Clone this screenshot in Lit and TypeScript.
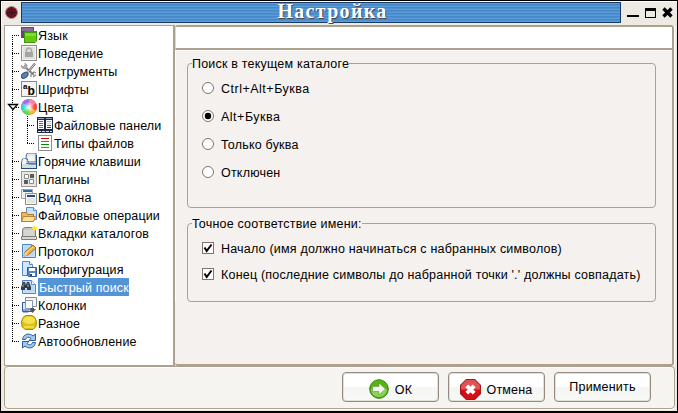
import { LitElement, html, svg, css } from "lit";
import { customElement, property, state } from "lit/decorators.js";
import { classMap } from "lit/directives/class-map.js";

const page = svg`<path d="M1.500 1.500h9l4 4v9h-13z" fill="#d5e9fb" stroke="#4c83c3"/><path d="M2.500 2.500h7v3h4v8h-11z" fill="#b8d9f7"/><path d="M10.500 1.500v4h4" fill="#f5fbff" stroke="#5b91cc"/>`;

const icons: Record<string, unknown> = {
  lang: svg`<path d="M0 0h13v11H0z" fill="#67466f"/><path d="M1 1h11v3H1z" fill="#8c6c94"/><path d="M3 5l2-1h11v10l-2 2H3z" fill="#3f9710"/><path d="M4 6h11v9H4z" fill="#68c80c"/><path d="M4 6h11v3H4z" fill="#83dd30"/>`,
  lock: svg`<rect x=".5" y=".5" width="15" height="15" fill="#f2f2f0" stroke="#8f8f8c"/><path d="M2 2h12v12H2z" fill="#e0e0de"/><path d="M5.500 8V5.500a2.500 2.500 0 0 1 5 0V8" fill="none" stroke="#aaa" stroke-width="1.500"/><path d="M4 7h8v5H4z" fill="#a5a5a3"/>`,
  tools: svg`<path d="M3 3l10 9" stroke="#858585" stroke-width="2"/><path d="M0 2l2 2 2-1V0l2 2v3L4 6 1 5z" fill="#b5b5b5" stroke="#777" stroke-width=".5"/><path d="M14 .5L7 9" stroke="#666" stroke-width="2.200"/><path d="M14 .5L7 9" stroke="#ddd" stroke-width="1"/><path d="M10 14v-3l3-2 2 1M12 14l3-2" stroke="#888" stroke-width="1.300" fill="none"/><ellipse cx="3.700" cy="12.300" rx="3.800" ry="2.500" transform="rotate(-40 3.700 12.300)" fill="#5a82ad" stroke="#2d4d73"/>`,
  fonts: svg`<rect x=".5" y=".5" width="15" height="15" fill="#f4f4f2" stroke="#888"/><text x="2" y="7.500" font-size="8" font-weight="bold" font-family="Liberation Sans,sans-serif">a</text><text x="6.500" y="13.500" font-size="12" font-weight="bold" font-family="Liberation Sans,sans-serif">b</text>`,
  colors: svg`<g transform="translate(8 8)"><path d="M0 0V-8A8 8 0 0 1 7 -4z" fill="#ff829c"/><path d="M0 0L7-4A8 8 0 0 1 7 4z" fill="#ff4b46"/><path d="M0 0L7 4A8 8 0 0 1 0 8z" fill="#ffb43a"/><path d="M0 0V8A8 8 0 0 1-7 4z" fill="#59e34c"/><path d="M0 0L-7 4A8 8 0 0 1-7-4z" fill="#39d8e8"/><path d="M0 0L-7-4A8 8 0 0 1 0-8z" fill="#a66af5"/><circle r="4.500" fill="#fff" opacity=".35"/><circle r="2.500" fill="#fff" opacity=".6"/><circle r="7.500" fill="none" stroke="#8886" /></g>`,
  panels: svg`<path d="M0 0h16v16H0z" fill="#202548"/><path d="M1 1h6v1H1zm8 0h6v1H9z" fill="#8ea0c8"/><path d="M1 3h6v9H1zm8 0h6v9H9z" fill="#fff"/><path d="M2 4h4v1H2zM10 8h4v1h-4z" fill="#f03030"/><path d="M2 6h4v1H2z" fill="#e0c"/><path d="M2 8h4v1H2z" fill="#008a80"/><path d="M2 10h4v1H2z" fill="#e33"/><path d="M10 4h4v1h-4z" fill="#3dd"/><path d="M10 6h4v1h-4z" fill="#ed0"/><path d="M10 10h4v1h-4z" fill="#22f"/><path d="M1 14.500h14" stroke="#dde" stroke-dasharray="3 1"/>`,
  types: svg`<rect x="1.500" y=".5" width="13" height="15" fill="#fff" stroke="#8c8c88"/><path d="M4 3.500h8" stroke="#c00"/><path d="M4 6.500h8" stroke="#f0f"/><path d="M4 9.500h8" stroke="#080"/><path d="M4 12.500h8" stroke="#c3a"/>`,
  keys: svg`<path d="M5.500 1l2-1h7.500v9H4.500z" fill="#e5e5e2" stroke="#4d76a6"/><path d="M.5 10l1-4h5l1 5h8v4.500H.5z" fill="#d9dcdc" stroke="#315f97"/><path d="M1 10l1-4h3v5H1zM7 3h6v5H7z" fill="#f5f5f2"/><path d="M0 15.500h16M15.500 2v13" stroke="#204a87"/><path d="M5 10.500h10" stroke="#547daa"/>`,
  plugins: svg`<rect x=".5" y=".5" width="15" height="15" fill="#e8e8e5" stroke="#999994"/><path d="M3.500 3.500h4v4h-4zM8.500 8.500h4v4h-4z" fill="#fff" stroke="#8b8b88"/><path d="M9 3h4v4H9zM3 9h4v4H3z" fill="#566063"/>`,
  windows: svg`<path d="M.5.5h11v9H.5z" fill="#eee" stroke="#a5a5a1"/><path d="M2 1h9v2H2z" fill="#3465a4"/><path d="M4.500 4.500h11v11h-11z" fill="#f6f6f4" stroke="#8d8d89"/><path d="M6 6h8v2H6z" fill="#204a87"/><path d="M6 9h8v5H6z" fill="#e4e4e2"/>`,
  files: svg`<path d="M5.500.5h7l3 3v9h-10z" fill="#c7e2fa" stroke="#528bc8"/><path d="M12.500.5v3h3" fill="#fff" stroke="#528bc8"/><path d="M.5 14.500v-9h5l1 2h6v7z" fill="#efb557" stroke="#b27b25"/><path d="M.5 14.500l2-5h12l-2 5z" fill="#ffe09a" stroke="#ba852f"/>`,
  tabs: svg`<path d="M1.500 12V5.500q0-3 3-3h7q3 0 3 3V12" fill="#c7c7c4" stroke="#7d7d79"/><path d="M.5 11.500h15v3H.5z" fill="#d8d8d4" stroke="#7d7d79"/><path d="M3 5h10v6H3z" fill="#d6d6d2"/><path d="M13 0l1 2h2v2l-2 1-1 1-1-2-2-1 2-1z" fill="#ffee20"/>`,
  protocol: svg`${page}<path d="M3 13l1-4 8-7 3 3-8 7z" fill="#f3b14b" stroke="#a66c16"/><path d="M3 13l1-4 3 3z" fill="#f3dfb7"/><path d="M5 10l7-6" stroke="#ffe29a"/>`,
  config: svg`<path d="M1.500.5h7l3 3v11h-10z" fill="#cfe6fb" stroke="#528bc8"/><path d="M8.500.5v3h3" fill="#fff" stroke="#528bc8"/><path d="M6.500 6.500h9v9h-8l-1-1z" fill="#5788c5" stroke="#2d5c9c"/><path d="M8 7h6v3H8zM9 12h5v3H9z" fill="#fff"/><path d="M9 13h2v2H9z" fill="#446"/>`,
  search: svg`${page}<path d="M0 8l2-5h2l1 3 1-3h2l2 5v3H6V9H4v2H0z" fill="#353a3e"/><path d="M1 7h2M6 7h2" stroke="#a6afb7"/><path d="M3 4v2M7 4v2" stroke="#75808a"/>`,
  columns: svg`<path d="M4.500.5h11v9h-11z" fill="#f3f3f1" stroke="#7f8d9d"/><path d="M1.500 5.500h9v9h-9z" fill="#dcebf8" stroke="#2a5d9d"/><path d="M4.500 3.500h7v8h-7z" fill="#fff" stroke="#8497ac"/><path d="M10 11h3v1h2l-3.500 4L8 12h2z" fill="#52545d"/><path d="M2 13h6M2 15h5" stroke="#3465a4"/>`,
  misc: svg`<path d="M5 .5h6l3 2 1.500 4-.5 5-3 3H4l-3-3-.500-5L2 2.500z" fill="#dec31b" stroke="#aa8800"/><ellipse cx="8" cy="5.300" rx="6" ry="3.800" fill="#f3e252"/><path d="M3 12h10" stroke="#f3dc3c" stroke-width="2"/>`,
  update: svg`<path d="M1.500 6.500C2.500 0 9 0 12 3l2.500-2v6.500H8l2-2C8 3.500 5 4 4.500 6.500z" fill="#a5c8eb" stroke="#285f9f"/><path d="M14.500 9.500C13.500 16 7 16 4 13l-2.500 2V8.500H8l-2 2c2 2 5 1.500 5.500-1z" fill="#a5c8eb" stroke="#285f9f"/>`,
};

interface Item { icon: string; label: string; level?: number; open?: boolean; last?: boolean; }
const items: Item[] = [
  { icon: "lang", label: "Язык" },
  { icon: "lock", label: "Поведение" },
  { icon: "tools", label: "Инструменты" },
  { icon: "fonts", label: "Шрифты" },
  { icon: "colors", label: "Цвета", open: true },
  { icon: "panels", label: "Файловые панели", level: 1 },
  { icon: "types", label: "Типы файлов", level: 1, last: true },
  { icon: "keys", label: "Горячие клавиши" },
  { icon: "plugins", label: "Плагины" },
  { icon: "windows", label: "Вид окна" },
  { icon: "files", label: "Файловые операции" },
  { icon: "tabs", label: "Вкладки каталогов" },
  { icon: "protocol", label: "Протокол" },
  { icon: "config", label: "Конфигурация" },
  { icon: "search", label: "Быстрый поиск" },
  { icon: "columns", label: "Колонки" },
  { icon: "misc", label: "Разное" },
  { icon: "update", label: "Автообновление", last: true },
];

@customElement("settings-tree")
export class SettingsTree extends LitElement {
  @state() private selected = "search";
  static styles = css`
    :host { display: block; box-sizing: border-box; width: 171px; height: 341px; background: #fff; border: solid #ada08f; border-width: 1px 2px 1px 1px; letter-spacing: .14px; }
    .row { display: flex; align-items: center; height: 18px; white-space: pre; }
    .gutter { width: 16px; height: 18px; flex: none; }
    .icon { width: 16px; height: 16px; flex: none; display: block; }
    .label { box-sizing: border-box; height: 18px; line-height: 18px; padding-top: 1px; margin-left: 1px; }
    .selected .label { background: #5294d6; color: #fff; padding-left: 1px; }
  `;
  render() {
    return items.map((it, i) => {
      const rootLast = i === items.length - 1;
      const dots = (d: string, dash = "1 1") => svg`<path d=${d} stroke="#000" stroke-dasharray=${dash} fill="none"/>`;
      return html`<div class=${classMap({ row: true, selected: it.icon === this.selected })}
        @click=${() => (this.selected = it.icon)}>
        <svg class="gutter">
          ${dots(i === 0 ? "M7.500 9V18" : rootLast ? "M7.500 0V10" : "M7.500 0V18")}
          ${it.level ? "" : dots("M7 9.500H15")}
          ${it.open ? svg`<path d="M3.500 6.500h9L8 11.500z" fill="#fff" stroke="#000" stroke-width="1.300"/>` : ""}
        </svg>
        ${it.level ? html`<svg class="gutter">${dots(it.last ? "M6.500 0V10" : "M6.500 0V18")}${dots("M6 9.500H13")}</svg>` : ""}
        <svg class="icon" viewBox="0 0 16 16">${icons[it.icon]}</svg>
        <span class="label">${it.label}</span>
      </div>`;
    });
  }
}

@customElement("option-group")
export class OptionGroup extends LitElement {
  @property() heading = "";
  @property() kind = "radio";
  @property({ attribute: false }) options: { text: string; on?: boolean }[] = [];
  static styles = css`
    :host { display: block; }
    fieldset { box-sizing: border-box; height: 100%; margin: 0; padding: 0 0 0 14px; border: 1px solid #ada08f; border-radius: 4px; min-width: 0; }
    legend { box-sizing: border-box; padding: 1px 0 0; margin-left: -10px; height: 16px; line-height: 16px; white-space: nowrap; }
    .list { display: flex; flex-direction: column; padding-top: 3px; }
    .check { padding-top: 4px; }
    .option { height: 28px; display: flex; align-items: center; gap: 7px; white-space: nowrap; }
    .check .option { height: 26px; }
    .option span { padding-top: 1px; }
    .latin { letter-spacing: .5px; }
    svg { width: 12px; height: 12px; display: block; overflow: visible; }
  `;
  render() {
    const radio = this.kind === "radio";
    return html`<fieldset><legend>${this.heading}</legend>
      <div class=${classMap({ list: true, check: !radio })}>
        ${this.options.map(o => html`<div class="option">
          <svg viewBox="0 0 12 12">${radio
            ? svg`<circle cx="6" cy="6" r="5.500" fill="#fff" stroke="#80766c"/>${o.on ? svg`<circle cx="6" cy="6" r="3.200"/>` : ""}`
            : svg`<rect x=".5" y=".5" width="11" height="11" fill="#fff" stroke="#80766c"/>${o.on ? svg`<path d="M2.500 5.500l2.200 3.500L9.500 2.500" fill="none" stroke="#000" stroke-width="2"/>` : ""}`}
          </svg><span class=${classMap({ latin: /^[A-Z]\w*\+/.test(o.text) })}>${o.text}</span></div>`)}
      </div></fieldset>`;
  }
}

@customElement("app-root")
export class AppRoot extends LitElement {
  static styles = css`
    :host { display: block; width: 678px; height: 413px; font: 12.5px/16px "Liberation Sans", sans-serif; letter-spacing: .2px; color: #000; }
    .window { box-sizing: border-box; width: 678px; height: 413px; border: solid #000; border-width: 1px 1px 2px; background: #eceae2; display: flex; flex-direction: column; overflow: hidden; }
    .bar { height: 24px; flex: none; box-sizing: border-box; border-top: 1px solid #fff; border-left: 1px solid #fff; display: flex; }
    .app { width: 19px; padding: 4px 0 0 3px; box-sizing: border-box; }
    .app svg { width: 13px; height: 13px; display: block; }
    .title { width: 600px; height: 21px; box-sizing: border-box; border: 1px solid #183a66; background: repeating-linear-gradient(#5a9bda 0 1px, #4687c6 1px 2px, #4e90d0 2px 3px); color: #fff; text-align: center; padding-left: 23px; font: bold 20px/16px "Liberation Serif", serif; letter-spacing: 1.3px; text-shadow: 1px 1px 0 #4b4745; }
    .controls { width: 54px; height: 23px; display: block; }
    .main { display: flex; height: 341px; flex: none; padding-left: 3px; }
    .pane { width: 499px; height: 341px; box-sizing: border-box; border: solid #ada08f; border-width: 2px 2px 2px 0; border-radius: 3px; background: #f5f1ee; display: flex; flex-direction: column; box-shadow: 1px 0 #fff; }
    .head { height: 23px; box-sizing: border-box; background: #fff; border-bottom: 2px solid #ada08f; border-left: 1px solid #ded8cd; box-shadow: 0 1px #fff; flex: none; }
    .groups { padding: 5px 0 0 11px; width: 469px; border-left: 1px solid #fff; }
    .search { height: 153px; margin-bottom: 7px; }
    .match { height: 87px; }
    .footer { height: 43px; width: 671px; box-sizing: border-box; margin-left: 3px; border: 1px solid #ada08f; border-radius: 4px; background: #f6f4f0; box-shadow: inset 0 1px #fff, 0 1px #fff; display: flex; gap: 9px; padding: 5px 0 0 337px; }
    button { box-sizing: border-box; width: 97px; height: 30px; border: 1px solid #958a7f; border-radius: 4px; background: linear-gradient(#fff 50%, #f5f5f4 51%, #f8f8f7); box-shadow: inset 0 0 0 1px #e5dfd8; padding: 2px 0 0; font: inherit; letter-spacing: inherit; color: inherit; display: flex; align-items: center; justify-content: center; gap: 6px; }
    button svg { width: 20px; height: 20px; flex: none; margin-top: 2px; }
    button span { padding-top: 4px; }
    .plain { padding: 0 0 4px 0; }
    .cancel { gap: 5px; }
    .cancel svg { width: 21px; height: 21px; }
  `;
  render() {
    return html`<div class="window">
      <div class="bar">
        <div class="app"><svg viewBox="0 0 13 13"><circle cx="6.500" cy="6.500" r="6" fill="#701522" stroke="#a58b91"/><path d="M6.500 1v11M1 6.500h11M3 3l7 7M10 3l-7 7" stroke="#43101a"/><circle cx="6.500" cy="6.500" r="1.500" fill="#24243e"/></svg></div>
        <div class="title">Настройка</div>
        <svg class="controls"><path d="M6 13h12v2H6z"/><path d="M24 6h11v10H24zM25 9v6h9V9z" fill-rule="evenodd"/><path d="M42.500 6.500l8 8M50.500 6.500l-8 8" stroke="#000" stroke-width="3.300"/></svg>
      </div>
      <div class="main">
        <settings-tree></settings-tree>
        <div class="pane">
          <div class="head"></div>
          <div class="groups">
            <option-group class="search" heading="Поиск в текущем каталоге" .options=${[
              { text: "Ctrl+Alt+Буква" }, { text: "Alt+Буква", on: true }, { text: "Только буква" }, { text: "Отключен" }]}></option-group>
            <option-group class="match" kind="check" heading="Точное соответствие имени:" .options=${[
              { text: "Начало (имя должно начинаться с набранных символов)", on: true },
              { text: "Конец (последние символы до набранной точки '.' должны совпадать)", on: true }]}></option-group>
          </div>
        </div>
      </div>
      <div class="footer">
        <button><svg viewBox="0 0 20 20"><circle cx="10" cy="10" r="9.300" fill="#55b313" stroke="#398009"/><path d="M2 10a8 8 0 0 0 16 0z" fill="#8bd35a"/><path d="M3.500 7.500H10V4l6.500 6L10 16v-3.500H3.500z" fill="#f3f3ef" stroke="#5d9b35" stroke-width=".6"/></svg><span>ОК</span></button>
        <button class="cancel"><svg viewBox="0 0 20 20"><path d="M6 .5h8l5.500 5.500v8L14 19.500H6L.5 14V6z" fill="#d40f16" stroke="#a01a1c"/><path d="M6 1h8l5 5v4H1V6z" fill="#de5555"/><path d="M6.500 6.500l7 7M13.500 6.500l-7 7" stroke="#fff" stroke-width="3.800"/></svg><span>Отмена</span></button>
        <button class="plain"><span>Применить</span></button>
      </div>
    </div>`;
  }
}
